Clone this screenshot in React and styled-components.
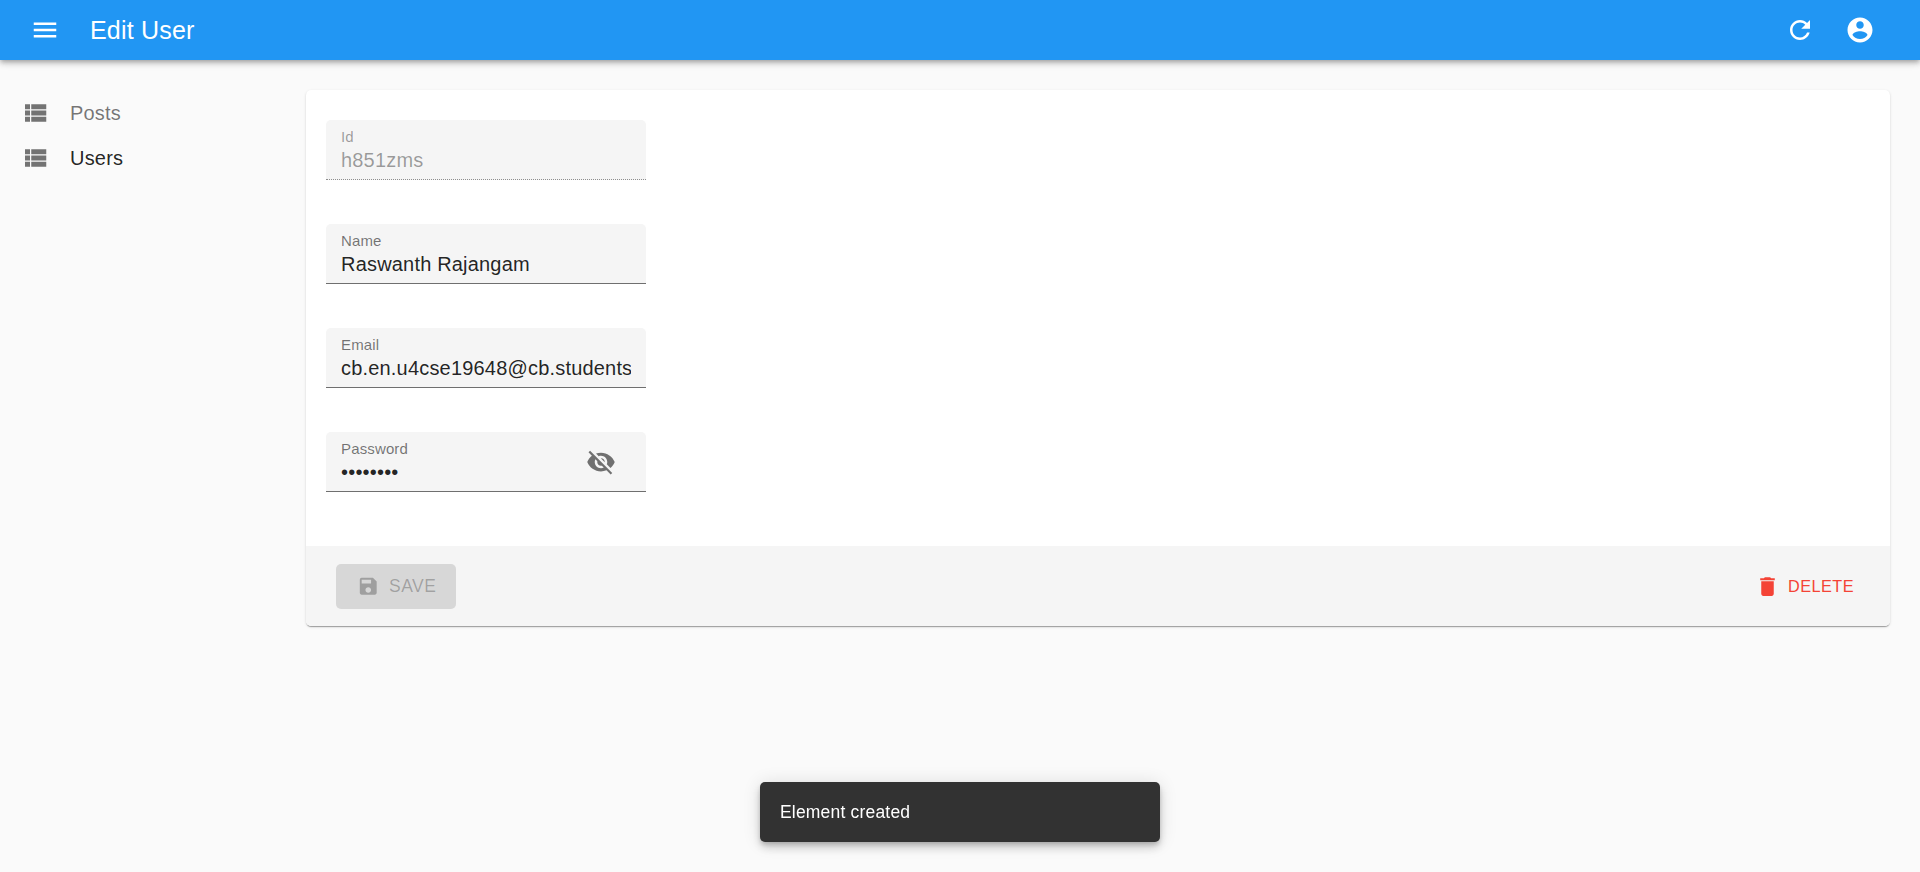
import styled, { createGlobalStyle } from 'styled-components'

const GlobalStyle = createGlobalStyle`
  html, body { margin: 0; padding: 0; }
  body {
    min-height: 100vh;
    background: #fafafa;
    color: rgba(0, 0, 0, 0.87);
    font-family: "Liberation Sans", Arial, sans-serif;
    font-size: 20px;
  }
`

const Icon = ({ d, size = 30 }) => (
  <svg width={size} height={size} viewBox="0 0 24 24" fill="currentColor" aria-hidden="true">
    <path d={d} />
  </svg>
)

const paths = {
  menu: 'M3 18h18v-2H3v2zm0-5h18v-2H3v2zm0-7v2h18V6H3z',
  refresh: 'M17.65 6.35C16.2 4.9 14.21 4 12 4c-4.42 0-7.99 3.58-7.99 8s3.57 8 7.99 8c3.73 0 6.84-2.55 7.73-6h-2.08c-.82 2.33-3.04 4-5.65 4-3.31 0-6-2.69-6-6s2.69-6 6-6c1.66 0 3.14.69 4.22 1.78L13 11h7V4l-2.35 2.35z',
  account: 'M12 2C6.48 2 2 6.48 2 12s4.48 10 10 10 10-4.48 10-10S17.52 2 12 2zm0 3c1.66 0 3 1.34 3 3s-1.34 3-3 3-3-1.34-3-3 1.34-3 3-3zm0 14.2c-2.5 0-4.71-1.28-6-3.22.03-1.99 4-3.08 6-3.08 1.99 0 5.97 1.09 6 3.08-1.29 1.94-3.5 3.22-6 3.22z',
  list: 'M4 14h4v-4H4v4zm0 5h4v-4H4v4zM4 9h4V5H4v4zm5 5h12v-4H9v4zm0 5h12v-4H9v4zM9 5v4h12V5H9z',
  eyeOff: 'M12 7c2.76 0 5 2.24 5 5 0 .65-.13 1.26-.36 1.83l2.92 2.92c1.51-1.26 2.7-2.89 3.43-4.75-1.73-4.39-6-7.5-11-7.5-1.4 0-2.74.25-3.98.7l2.16 2.16C10.74 7.13 11.35 7 12 7zM2 4.27l2.28 2.28.46.46C3.08 8.3 1.78 10.02 1 12c1.73 4.39 6 7.5 11 7.5 1.55 0 3.03-.3 4.38-.84l.42.42L19.73 22 21 20.73 3.27 3 2 4.27zM7.53 9.8l1.55 1.55c-.05.21-.08.43-.08.65 0 1.66 1.34 3 3 3 .22 0 .44-.03.65-.08l1.55 1.55c-.67.33-1.41.53-2.2.53-2.76 0-5-2.24-5-5 0-.79.2-1.53.53-2.2zm4.31-.78l3.15 3.15.02-.16c0-1.66-1.34-3-3-3l-.17.01z',
  save: 'M17 3H5c-1.11 0-2 .9-2 2v14c0 1.1.89 2 2 2h14c1.1 0 2-.9 2-2V7l-4-4zm-5 16c-1.66 0-3-1.34-3-3s1.34-3 3-3 3 1.34 3 3-1.34 3-3 3zm3-10H5V5h10v4z',
  trash: 'M6 19c0 1.1.9 2 2 2h8c1.1 0 2-.9 2-2V7H6v12zM19 4h-3.5l-1-1h-5l-1 1H5v2h14V4z',
}

export default function App() {
  return (
    <>
      <GlobalStyle />
      <AppBar>
        <IconButton><Icon d={paths.menu} /></IconButton>
        <Title>Edit User</Title>
        <IconButton><Icon d={paths.refresh} /></IconButton>
        <IconButton><Icon d={paths.account} /></IconButton>
      </AppBar>
      <Body>
        <Sidebar>
          <MenuItem>
            <Icon d={paths.list} />
            <MenuLabel>Posts</MenuLabel>
          </MenuItem>
          <MenuItem $active>
            <Icon d={paths.list} />
            <MenuLabel>Users</MenuLabel>
          </MenuItem>
        </Sidebar>
        <Main>
          <Card>
            <FormBody>
              <Field $disabled>
                <FieldLabel>Id</FieldLabel>
                <FieldInput disabled value="h851zms" readOnly />
              </Field>
              <Field>
                <FieldLabel>Name</FieldLabel>
                <FieldInput value="Raswanth Rajangam" readOnly />
              </Field>
              <Field>
                <FieldLabel>Email</FieldLabel>
                <FieldInput value="cb.en.u4cse19648@cb.students.amrita.edu" readOnly />
              </Field>
              <Field>
                <FieldLabel>Password</FieldLabel>
                <FieldInput type="password" value="password" readOnly />
                <EyeButton><Icon d={paths.eyeOff} /></EyeButton>
              </Field>
            </FormBody>
            <FormToolbar>
              <SaveButton disabled>
                <Icon d={paths.save} size={22.5} />
                SAVE
              </SaveButton>
              <DeleteButton>
                <Icon d={paths.trash} size={25} />
                DELETE
              </DeleteButton>
            </FormToolbar>
          </Card>
        </Main>
      </Body>
      <Snackbar>Element created</Snackbar>
    </>
  )
}

const AppBar = styled.header`
  height: 60px;
  display: flex;
  align-items: center;
  padding: 0 30px 0 15px;
  background: #2196f3;
  color: #fff;
  box-shadow: 0 2px 4px -1px rgba(0, 0, 0, 0.2), 0 4px 5px 0 rgba(0, 0, 0, 0.14), 0 1px 10px 0 rgba(0, 0, 0, 0.12);
`
const IconButton = styled.div`
  width: 60px;
  height: 60px;
  display: flex;
  align-items: center;
  justify-content: center;
`
const Title = styled.h1`
  flex: 1;
  margin: 0 0 0 15px;
  font-size: 25px;
  font-weight: 400;
  line-height: 1.6;
  letter-spacing: 0.0075em;
`
const Body = styled.div`
  display: flex;
`
const Sidebar = styled.nav`
  width: 306px;
  flex-shrink: 0;
  padding-top: 30px;
  box-sizing: border-box;
`
const MenuItem = styled.div`
  height: 45px;
  display: flex;
  align-items: center;
  padding-left: 20px;
  color: ${props => (props.$active ? 'rgba(0, 0, 0, 0.87)' : 'rgba(0, 0, 0, 0.54)')};
  svg { color: rgba(0, 0, 0, 0.54); }
`
const MenuLabel = styled.span`
  margin-left: 20px;
  padding-top: 2px;
  font-size: 20px;
  letter-spacing: 0.00938em;
`
const Main = styled.main`
  flex: 1;
  padding: 30px 30px 0 0;
`
const Card = styled.section`
  background: #fff;
  border-radius: 5px;
  overflow: hidden;
  box-shadow: 0 2px 1px -1px rgba(0, 0, 0, 0.2), 0 1px 1px 0 rgba(0, 0, 0, 0.14), 0 1px 3px 0 rgba(0, 0, 0, 0.12);
`
const FormBody = styled.div`
  display: flex;
  flex-direction: column;
  gap: 44px;
  padding: 30px 20px 54px;
`
const Field = styled.label`
  position: relative;
  width: 320px;
  height: 60px;
  box-sizing: border-box;
  display: flex;
  flex-direction: column;
  padding: 8px 15px 0;
  background: #f5f5f5;
  border-radius: 5px 5px 0 0;
  border-bottom: 1px ${props => (props.$disabled ? 'dotted rgba(0, 0, 0, 0.42)' : 'solid rgba(0, 0, 0, 0.55)')};
  color: ${props => (props.$disabled ? 'rgba(0, 0, 0, 0.38)' : 'rgba(0, 0, 0, 0.54)')};
`
const FieldLabel = styled.span`
  font-size: 15px;
  line-height: 18px;
  letter-spacing: 0.00938em;
`
const FieldInput = styled.input`
  width: 100%;
  border: 0;
  padding: 0;
  margin: 0;
  height: 28px;
  background: transparent;
  outline: none;
  font: inherit;
  font-size: 20px;
  letter-spacing: 0.00938em;
  color: rgba(0, 0, 0, 0.87);
  &:disabled { color: rgba(0, 0, 0, 0.38); }
`
const EyeButton = styled.span`
  position: absolute;
  right: 30px;
  top: 15px;
  width: 30px;
  height: 30px;
  color: rgba(0, 0, 0, 0.54);
`
const FormToolbar = styled.div`
  height: 80px;
  display: flex;
  align-items: center;
  justify-content: space-between;
  padding: 0 36px 0 30px;
  background: #f5f5f5;
`
const SaveButton = styled.button`
  width: 120px;
  height: 45px;
  display: flex;
  align-items: center;
  justify-content: center;
  gap: 10px;
  padding: 0 0 0 1px;
  border: 0;
  border-radius: 5px;
  background: rgba(0, 0, 0, 0.12);
  color: rgba(0, 0, 0, 0.26);
  font: inherit;
  font-size: 17.5px;
  letter-spacing: 0.02857em;
`
const DeleteButton = styled.button`
  display: flex;
  align-items: center;
  gap: 8px;
  padding: 0;
  border: 0;
  background: transparent;
  color: #f44336;
  font: inherit;
  font-size: 16.25px;
  letter-spacing: 0.02857em;
`
const Snackbar = styled.div`
  position: fixed;
  left: 760px;
  bottom: 30px;
  width: 400px;
  height: 60px;
  box-sizing: border-box;
  display: flex;
  align-items: center;
  padding: 0 20px;
  border-radius: 5px;
  background: #323232;
  color: #fff;
  font-size: 17.5px;
  letter-spacing: 0.01071em;
  box-shadow: 0 3px 5px -1px rgba(0, 0, 0, 0.2), 0 6px 10px 0 rgba(0, 0, 0, 0.14), 0 1px 18px 0 rgba(0, 0, 0, 0.12);
`
